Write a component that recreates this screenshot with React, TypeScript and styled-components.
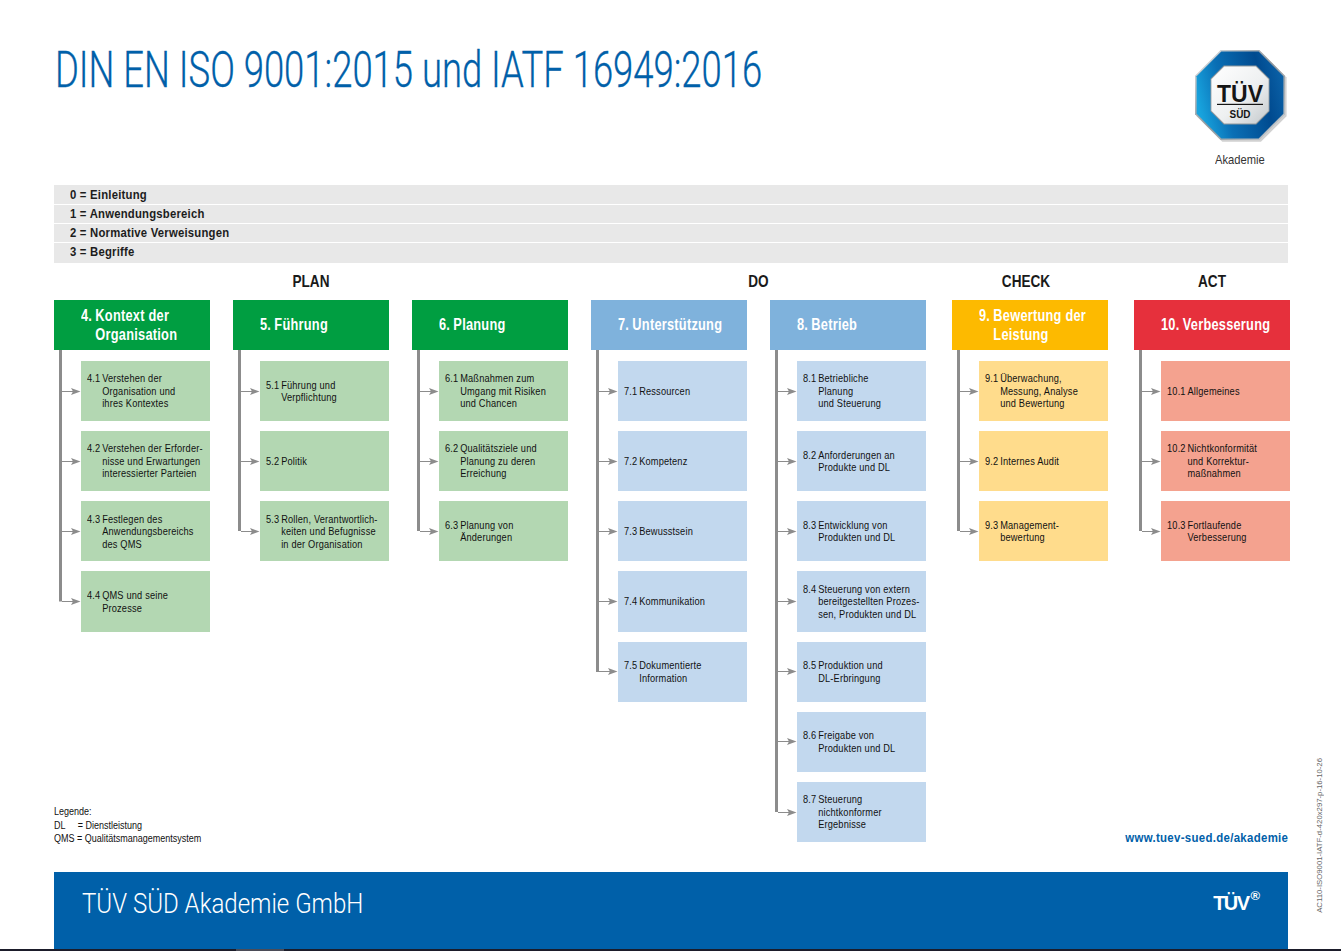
import React from "react";
import styled, { createGlobalStyle } from "styled-components";

const sans = '"Liberation Sans", Arial, sans-serif';

const Global = createGlobalStyle`
  html, body { margin: 0; padding: 0; background: #fff; }
  body { font-family: ${sans}; color: #1a1a1a; }
`;

const Page = styled.div`
  width: 1341px;
  height: 951px;
  overflow: hidden;
  display: flex;
  flex-direction: column;
`;
const Body = styled.div`
  flex: 1;
  display: flex;
  min-height: 0;
`;
const Main = styled.main`
  width: 1234px;
  flex: none;
  margin-left: 54px;
  display: flex;
  flex-direction: column;
`;
const Masthead = styled.header`
  height: 185px;
  flex: none;
  display: flex;
  justify-content: space-between;
  align-items: flex-start;
`;
const Title = styled.h1`
  margin: 41px 0 0 1px;
  font-family: Roboto, sans-serif;
  font-weight: 300;
  font-size: 49.5px;
  line-height: 58px;
  color: #0060a9;
  white-space: nowrap;
  -webkit-text-stroke: 0.3px #0060a9;
  transform: scaleX(0.736);
  transform-origin: left center;
`;
const LogoBlock = styled.div`
  width: 96px;
  margin: 49px -2px 0 0;
  display: flex;
  flex-direction: column;
  align-items: center;
`;
const LogoCaption = styled.div`
  font-size: 13px;
  line-height: 14px;
  margin: 8px 4px 0 0;
  color: #333;
  transform: scaleX(0.86);
`;
const Intro = styled.ul`
  list-style: none;
  margin: 0;
  padding: 0;
  flex: none;
  display: flex;
  flex-direction: column;
  gap: 1px;
`;
const IntroRow = styled.li`
  height: 18px;
  background: #e8e8e8;
  padding-left: 16px;
  font-size: 13px;
  font-weight: 700;
  line-height: 18px;
  letter-spacing: 0.25px;
  color: #1c1c1c;
  &:first-child {
    height: 19px;
    line-height: 20px;
  }
  &:last-child {
    height: 20px;
  }
`;
const IntroText = styled.span`
  display: inline-block;
  transform: scaleX(0.87);
  transform-origin: left center;
`;
const Board = styled.div`
  display: grid;
  flex: none;
  margin-top: 8px;
`;
const Phases = styled.div`
  grid-area: 1 / 1;
  display: flex;
  gap: 23px;
`;
const Phase = styled.section<{ $gap?: number }>`
  display: flex;
  flex-direction: column;
  margin-left: ${(p) => p.$gap ?? 0}px;
`;
const PhaseLabel = styled.h2<{ $shift?: number }>`
  margin: 0 ${(p) => p.$shift ?? 0}px 0 0;
  height: 29px;
  text-align: center;
  font-size: 17px;
  font-weight: 700;
  line-height: 21px;
  color: #1a1a1a;
  transform: scaleX(0.8);
`;
const PhaseColumns = styled.div`
  display: flex;
  gap: 23px;
`;
const Column = styled.div`
  width: 156px;
  display: flex;
  flex-direction: column;
`;
const ColumnHead = styled.div<{ $color: string }>`
  height: 50px;
  background: ${(p) => p.$color};
  color: #fff;
  padding-left: 27px;
  display: flex;
  align-items: center;
  font-size: 16px;
  font-weight: 700;
  line-height: 19.5px;
  letter-spacing: 0.3px;
`;
const HeadContent = styled.div`
  display: flex;
  gap: 4px;
  white-space: nowrap;
  transform: scaleX(0.8);
  transform-origin: left center;
`;
const Rows = styled.div`
  padding-top: 6px;
  background: linear-gradient(#8c8c8c, #8c8c8c) 5px 0 / 3px 6px no-repeat;
`;
const Row = styled.div`
  display: flex;
  background: linear-gradient(#8c8c8c, #8c8c8c) 5px 0 / 3px 100% no-repeat;
  &:last-child {
    background-size: 3px 50%;
  }
`;
const Connector = styled.div`
  width: 27px;
  flex: none;
  display: flex;
  align-items: center;
  padding-left: 8px;
  box-sizing: border-box;
`;
const Item = styled.div<{ $color: string }>`
  width: 129px;
  height: 60.17px;
  margin: 5px 0;
  background: ${(p) => p.$color};
  padding-left: 6px;
  box-sizing: border-box;
  display: flex;
  align-items: center;
  font-size: 10.5px;
  line-height: 12.5px;
  letter-spacing: 0.2px;
  color: #111;
`;
const ItemContent = styled.div`
  display: flex;
  gap: 2px;
  white-space: nowrap;
  transform: scaleX(0.88);
  transform-origin: left center;
`;
const Notes = styled.div`
  grid-area: 1 / 1;
  align-self: end;
  display: flex;
  justify-content: space-between;
  align-items: flex-end;
  margin: 0 2px 2px 0;
`;
const Legend = styled.div`
  font-size: 10px;
  line-height: 13.3px;
  color: #111;
  transform: scaleX(0.9);
  transform-origin: left center;
`;
const Url = styled.div`
  font-size: 13px;
  font-weight: 700;
  line-height: 14px;
  color: #0060a9;
  letter-spacing: 0.35px;
  transform: scaleX(0.88);
  transform-origin: right center;
`;
const FooterBand = styled.footer`
  height: 77px;
  flex: none;
  margin-top: 25px;
  background: #0060a9;
  color: #fff;
  display: flex;
  justify-content: space-between;
  align-items: flex-start;
  padding: 15px 28px 0 28px;
  box-sizing: border-box;
`;
const FooterName = styled.div`
  font-family: Roboto, sans-serif;
  font-weight: 300;
  font-size: 28.5px;
  line-height: 34px;
  white-space: nowrap;
  transform: scaleX(0.844);
  transform-origin: left center;
`;
const FooterMark = styled.div`
  font-family: ${sans};
  font-weight: 700;
  font-size: 20px;
  line-height: 24px;
  letter-spacing: -1.6px;
  margin-top: 4px;
  display: flex;
`;
const Reg = styled.span`
  font-size: 13px;
  line-height: 12px;
  letter-spacing: 0;
  margin-left: 2px;
  margin-top: -1px;
`;
const SideNote = styled.aside`
  margin-left: 27px;
  align-self: flex-end;
  margin-bottom: 36px;
  writing-mode: vertical-rl;
  transform: rotate(180deg);
  font-size: 7.75px;
  line-height: 10px;
  color: #666;
  white-space: nowrap;
`;
const ScreenEdge = styled.div`
  height: 2px;
  flex: none;
  background: #1b1c2a;
  display: flex;
  padding-left: 236px;
`;
const EdgeTab = styled.div`
  width: 48px;
  background: #4b4c57;
`;

function Arrow() {
  return (
    <svg width="19" height="9" viewBox="0 0 19 9" aria-hidden="true">
      <path d="M0 4.5H11" stroke="#8c8c8c" strokeWidth="1" fill="none" />
      <path d="M9 1L18.5 4.5L9 8L11 4.5Z" fill="#8c8c8c" />
    </svg>
  );
}

function Logo() {
  const oct = (c: number, r: number, k: number) => {
    const a = r * k;
    return [
      [c - a, c - r], [c + a, c - r], [c + r, c - a], [c + r, c + a],
      [c + a, c + r], [c - a, c + r], [c - r, c + a], [c - r, c - a],
    ].map((p) => p.join(",")).join(" ");
  };
  return (
    <svg width="96" height="96" viewBox="0 0 96 96" role="img" aria-label="TÜV SÜD">
      <defs>
        <linearGradient id="ring" x1="0" y1="0.55" x2="1" y2="0.3">
          <stop offset="0" stopColor="#18a4de" />
          <stop offset="0.3" stopColor="#0a6fb5" />
          <stop offset="0.75" stopColor="#004a8f" />
          <stop offset="1" stopColor="#0b62a8" />
        </linearGradient>
        <linearGradient id="steel" x1="0" y1="0" x2="1" y2="1">
          <stop offset="0" stopColor="#dfe3e6" />
          <stop offset="0.5" stopColor="#8e969c" />
          <stop offset="1" stopColor="#c9ced2" />
        </linearGradient>
        <linearGradient id="face" x1="0" y1="0" x2="1" y2="1">
          <stop offset="0" stopColor="#ffffff" />
          <stop offset="0.55" stopColor="#eef0f1" />
          <stop offset="1" stopColor="#c4c9cc" />
        </linearGradient>
      </defs>
      <polygon points={oct(46.6, 45, 0.43)} fill="#a3a3a3" opacity="0.5" transform="translate(1,1.2)" />
      <polygon points={oct(46, 45, 0.43)} fill="url(#steel)" />
      <polygon points={oct(46, 43.4, 0.43)} fill="url(#ring)" />
      <polygon points={oct(46, 29.5, 0.55)} fill="#8f979c" />
      <polygon points={oct(46, 28.6, 0.55)} fill="url(#face)" />
      <text x="46" y="53" textAnchor="middle" fontFamily="'Liberation Sans', sans-serif" fontWeight="700" fontSize="23.5" textLength="46" lengthAdjust="spacingAndGlyphs" fill="#151515">TÜV</text>
      <rect x="23" y="54.8" width="46" height="1.2" fill="#151515" />
      <text x="46" y="69" textAnchor="middle" fontFamily="'Liberation Sans', sans-serif" fontWeight="700" fontSize="11" textLength="21" lengthAdjust="spacingAndGlyphs" fill="#151515">SÜD</text>
    </svg>
  );
}

const G = { h: "#009e41", i: "#b3d7b2" };
const B = { h: "#7fb2dc", i: "#c2d8ee" };
const Y = { h: "#fdba00", i: "#ffdc8c" };
const R = { h: "#e6303c", i: "#f4a28f" };

type Col = { num: string; head: string[]; c: { h: string; i: string }; items: [string, string[]][] };

const col4: Col = { num: "4.", head: ["Kontext der", "Organisation"], c: G, items: [
  ["4.1", ["Verstehen der", "Organisation und", "ihres Kontextes"]],
  ["4.2", ["Verstehen der Erforder-", "nisse und Erwartungen", "interessierter Parteien"]],
  ["4.3", ["Festlegen des", "Anwendungsbereichs", "des QMS"]],
  ["4.4", ["QMS und seine", "Prozesse"]],
]};
const col5: Col = { num: "5.", head: ["Führung"], c: G, items: [
  ["5.1", ["Führung und", "Verpflichtung"]],
  ["5.2", ["Politik"]],
  ["5.3", ["Rollen, Verantwortlich-", "keiten und Befugnisse", "in der Organisation"]],
]};
const col6: Col = { num: "6.", head: ["Planung"], c: G, items: [
  ["6.1", ["Maßnahmen zum", "Umgang mit Risiken", "und Chancen"]],
  ["6.2", ["Qualitätsziele und", "Planung zu deren", "Erreichung"]],
  ["6.3", ["Planung von", "Änderungen"]],
]};
const col7: Col = { num: "7.", head: ["Unterstützung"], c: B, items: [
  ["7.1", ["Ressourcen"]],
  ["7.2", ["Kompetenz"]],
  ["7.3", ["Bewusstsein"]],
  ["7.4", ["Kommunikation"]],
  ["7.5", ["Dokumentierte", "Information"]],
]};
const col8: Col = { num: "8.", head: ["Betrieb"], c: B, items: [
  ["8.1", ["Betriebliche", "Planung", "und Steuerung"]],
  ["8.2", ["Anforderungen an", "Produkte und DL"]],
  ["8.3", ["Entwicklung von", "Produkten und DL"]],
  ["8.4", ["Steuerung von extern", "bereitgestellten Prozes-", "sen, Produkten und DL"]],
  ["8.5", ["Produktion und", "DL-Erbringung"]],
  ["8.6", ["Freigabe von", "Produkten und DL"]],
  ["8.7", ["Steuerung", "nichtkonformer", "Ergebnisse"]],
]};
const col9: Col = { num: "9.", head: ["Bewertung der", "Leistung"], c: Y, items: [
  ["9.1", ["Überwachung,", "Messung, Analyse", "und Bewertung"]],
  ["9.2", ["Internes Audit"]],
  ["9.3", ["Management-", "bewertung"]],
]};
const col10: Col = { num: "10.", head: ["Verbesserung"], c: R, items: [
  ["10.1", ["Allgemeines"]],
  ["10.2", ["Nichtkonformität", "und Korrektur-", "maßnahmen"]],
  ["10.3", ["Fortlaufende", "Verbesserung"]],
]};

function ProcessColumn({ col }: { col: Col }) {
  return (
    <Column>
      <ColumnHead $color={col.c.h}>
        <HeadContent>
          <span>{col.num}</span>
          <div>
            {col.head.map((l) => (
              <div key={l}>{l}</div>
            ))}
          </div>
        </HeadContent>
      </ColumnHead>
      <Rows>
        {col.items.map(([n, lines]) => (
          <Row key={n}>
            <Connector>
              <Arrow />
            </Connector>
            <Item $color={col.c.i}>
              <ItemContent>
                <span>{n}</span>
                <div>
                  {lines.map((l) => (
                    <div key={l}>{l}</div>
                  ))}
                </div>
              </ItemContent>
            </Item>
          </Row>
        ))}
      </Rows>
    </Column>
  );
}

export default function App() {
  return (
    <Page>
      <Global />
      <Body>
        <Main>
          <Masthead>
            <Title>DIN EN ISO 9001:2015 und IATF 16949:2016</Title>
            <LogoBlock>
              <Logo />
              <LogoCaption>Akademie</LogoCaption>
            </LogoBlock>
          </Masthead>
          <Intro>
            <IntroRow><IntroText>0 = Einleitung</IntroText></IntroRow>
            <IntroRow><IntroText>1 = Anwendungsbereich</IntroText></IntroRow>
            <IntroRow><IntroText>2 = Normative Verweisungen</IntroText></IntroRow>
            <IntroRow><IntroText>3 = Begriffe</IntroText></IntroRow>
          </Intro>
          <Board>
            <Phases>
              <Phase>
                <PhaseLabel>PLAN</PhaseLabel>
                <PhaseColumns>
                  <ProcessColumn col={col4} />
                  <ProcessColumn col={col5} />
                  <ProcessColumn col={col6} />
                </PhaseColumns>
              </Phase>
              <Phase>
                <PhaseLabel>DO</PhaseLabel>
                <PhaseColumns>
                  <ProcessColumn col={col7} />
                  <ProcessColumn col={col8} />
                </PhaseColumns>
              </Phase>
              <Phase $gap={3}>
                <PhaseLabel $shift={8}>CHECK</PhaseLabel>
                <PhaseColumns>
                  <ProcessColumn col={col9} />
                </PhaseColumns>
              </Phase>
              <Phase $gap={3}>
                <PhaseLabel>ACT</PhaseLabel>
                <PhaseColumns>
                  <ProcessColumn col={col10} />
                </PhaseColumns>
              </Phase>
            </Phases>
            <Notes>
              <Legend>
                <div>Legende:</div>
                <div>DL &nbsp;&nbsp;&nbsp; = Dienstleistung</div>
                <div>QMS = Qualitätsmanagementsystem</div>
              </Legend>
              <Url>www.tuev-sued.de/akademie</Url>
            </Notes>
          </Board>
          <FooterBand>
            <FooterName>TÜV SÜD Akademie GmbH</FooterName>
            <FooterMark>
              TÜV<Reg>®</Reg>
            </FooterMark>
          </FooterBand>
        </Main>
        <SideNote>AC110-ISO9001-IATF-d-420x297-p-16-10-26</SideNote>
      </Body>
      <ScreenEdge>
        <EdgeTab />
      </ScreenEdge>
    </Page>
  );
}
